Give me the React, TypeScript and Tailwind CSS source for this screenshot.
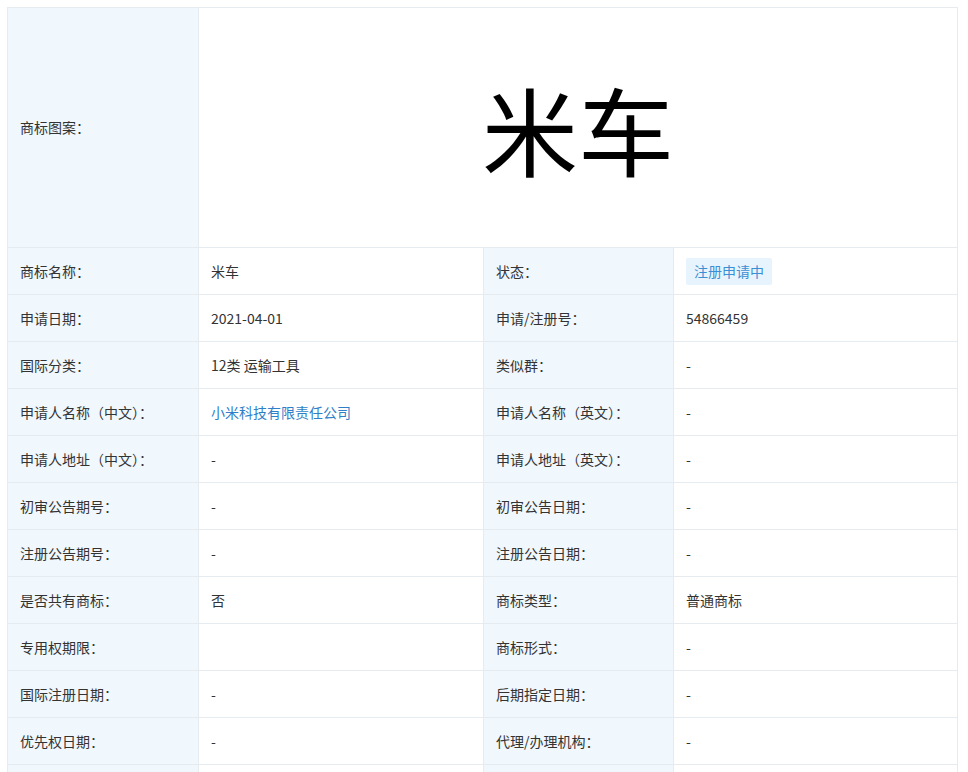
const F = { fontFamily: '"Microsoft YaHei","Noto Sans CJK SC","Noto Sans",sans-serif' };
const rows: [string, React.ReactNode, string, React.ReactNode][] = [
  ["商标名称：", "米车", "状态：", <span className="bg-[#e8f4fd] text-[#3b8fd4] px-[8px] py-[3px] rounded-[2px]">注册申请中</span>],
  ["申请日期：", "2021-04-01", "申请/注册号：", "54866459"],
  ["国际分类：", "12类 运输工具", "类似群：", "-"],
  ["申请人名称（中文）：", <span className="text-[#2f7fc8]">小米科技有限责任公司</span>, "申请人名称（英文）：", "-"],
  ["申请人地址（中文）：", "-", "申请人地址（英文）：", "-"],
  ["初审公告期号：", "-", "初审公告日期：", "-"],
  ["注册公告期号：", "-", "注册公告日期：", "-"],
  ["是否共有商标：", "否", "商标类型：", "普通商标"],
  ["专用权期限：", "", "商标形式：", "-"],
  ["国际注册日期：", "-", "后期指定日期：", "-"],
  ["优先权日期：", "-", "代理/办理机构：", "-"],
  ["", "", "", ""],
];
const L = "bg-[#f0f7fd] pl-[12px] flex items-center border-b border-[#e6ebf0]";
const V = "bg-white pl-[12px] flex items-center border-b border-l border-[#e6ebf0]";
export default function App() {
  return (
    <div className="w-[968px] h-[772px] overflow-hidden bg-white pt-[7px] pl-[7px] text-[14px] text-[#333]" style={F}>
      <div className="w-[951px] border border-[#e6ebf0]">
        <div className="flex h-[240px] border-b border-[#e6ebf0]">
          <div className="w-[190px] bg-[#f0f7fd] pl-[12px] flex items-center">商标图案：</div>
          <div className="flex-1 flex items-center justify-center border-l border-[#e6ebf0] text-[96px] text-black leading-none">米车</div>
        </div>
        {rows.map((r, i) => (
          <div key={i} className="grid grid-cols-[190px_285px_190px_1fr] h-[47px]">
            <div className={L}>{r[0]}</div>
            <div className={V}>{r[1]}</div>
            <div className={L + " border-l"}>{r[2]}</div>
            <div className={V}>{r[3]}</div>
          </div>
        ))}
      </div>
    </div>
  );
}
